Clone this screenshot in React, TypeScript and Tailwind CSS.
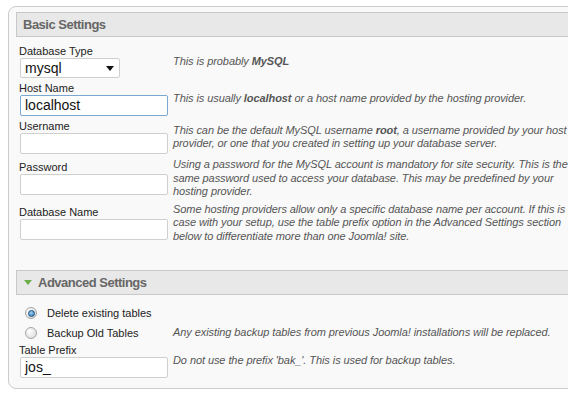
const FONT = "font-['Liberation_Sans',Arial,sans-serif]";

function Field({
  label,
  value,
  focused,
  children,
}: {
  label: string;
  value?: string;
  focused?: boolean;
  children: React.ReactNode;
}) {
  return (
    <div className="flex items-center py-[2px]">
      <div className="w-[157px] shrink-0 pl-[3px]">
        <div className="h-[13px] text-[11px] leading-[13px] text-[#222]">{label}</div>
        <div
          className={`ml-[1px] flex h-[21px] w-[148px] items-center rounded-[2px] border bg-white px-[4px] text-[14px] text-[#111] ${
            focused ? "border-[#7ba7d3]" : "border-[#cfcfcf]"
          }`}
        >
          {value}
        </div>
      </div>
      <Desc>{children}</Desc>
    </div>
  );
}

function Desc({ children }: { children: React.ReactNode }) {
  return (
    <div className="whitespace-nowrap text-[11px] italic leading-[13.5px] tracking-[-0.08px] text-[#555]">
      {children}
    </div>
  );
}

function Radio({ checked }: { checked?: boolean }) {
  return (
    <span className="flex h-[12px] w-[12px] items-center justify-center rounded-full border border-[#a5a5a5] bg-[radial-gradient(circle_at_35%_35%,#ffffff,#d6d6d6)]">
      {checked && (
        <span className="h-[7px] w-[7px] rounded-full border border-[#1d4f7c] bg-[radial-gradient(circle_at_40%_35%,#9fd0f5,#2a78b8)]" />
      )}
    </span>
  );
}

export default function App() {
  return (
    <div className={`h-[397px] w-[568px] overflow-hidden bg-white ${FONT}`}>
      <div className="ml-[8px] mt-[6px] w-[640px] rounded-[8px] border border-[#cccccc] bg-[#f9f9f9] pb-[10px] pl-[7px] pt-[5px]">
        <div className="flex h-[25px] items-center border border-[#c8c8c8] bg-[#e8e8e8] pl-[6px] text-[13px] font-bold tracking-[-0.5px] text-[#666]">
          Basic Settings
        </div>

        <div className="mt-[6px]">
          {/* Database type select */}
          <div className="flex items-center py-[2px]">
            <div className="w-[157px] shrink-0 pl-[3px]">
              <div className="h-[13px] text-[11px] leading-[13px] text-[#222]">Database Type</div>
              <div className="ml-[1px] flex h-[20px] w-[100px] items-center justify-between rounded-[2px] border border-[#cfcfcf] bg-white pl-[4px] pr-[5px] text-[14px] text-[#111]">
                <span>mysql</span>
                <svg width="8" height="5" viewBox="0 0 8 5">
                  <path d="M0 0h8L4 5z" fill="#111" />
                </svg>
              </div>
            </div>
            <Desc>
              This is probably <b>MySQL</b>
            </Desc>
          </div>

          <Field label="Host Name" value="localhost" focused>
            This is usually <b>localhost</b> or a host name provided by the hosting provider.
          </Field>

          <Field label="Username">
            This can be the default MySQL username <b>root</b>, a username provided by your host
            <br />
            provider, or one that you created in setting up your database server.
          </Field>

          <Field label="Password">
            Using a password for the MySQL account is mandatory for site security. This is the
            <br />
            same password used to access your database. This may be predefined by your
            <br />
            hosting provider.
          </Field>

          <Field label="Database Name">
            Some hosting providers allow only a specific database name per account. If this is
            <br />
            case with your setup, use the table prefix option in the Advanced Settings section
            <br />
            below to differentiate more than one Joomla! site.
          </Field>
        </div>

        <div className="mt-[25px] flex h-[25px] items-center border border-[#c8c8c8] bg-[#e8e8e8] pl-[7px] text-[13px] font-bold tracking-[-0.5px] text-[#666]">
          <svg width="8" height="5" viewBox="0 0 8 5" className="mr-[6px]">
            <path d="M0 0h8L4 5z" fill="#6aaf4a" />
          </svg>
          Advanced Settings
        </div>

        <div className="mt-[8px]">
          <div className="flex h-[20px] items-center">
            <div className="flex w-[157px] shrink-0 items-center pl-[9px]">
              <Radio checked />
              <span className="ml-[10px] text-[11px] text-[#222]">Delete existing tables</span>
            </div>
          </div>
          <div className="flex h-[20px] items-center">
            <div className="flex w-[157px] shrink-0 items-center pl-[9px]">
              <Radio />
              <span className="ml-[10px] text-[11px] text-[#222]">Backup Old Tables</span>
            </div>
            <Desc>Any existing backup tables from previous Joomla! installations will be replaced.</Desc>
          </div>

          <div className="mt-[1px] flex items-center">
            <div className="w-[157px] shrink-0 pl-[3px]">
              <div className="h-[13px] text-[11px] leading-[13px] text-[#222]">Table Prefix</div>
              <div className="ml-[1px] flex h-[21px] w-[148px] items-center rounded-[2px] border border-[#cfcfcf] bg-white px-[4px] text-[14px] text-[#111]">
                jos_
              </div>
            </div>
            <Desc>Do not use the prefix 'bak_'. This is used for backup tables.</Desc>
          </div>
        </div>
      </div>
    </div>
  );
}
